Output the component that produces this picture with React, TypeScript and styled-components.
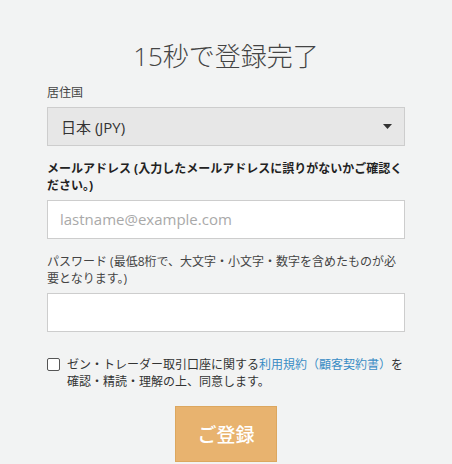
import styled, { createGlobalStyle } from "styled-components";

const GlobalStyle = createGlobalStyle`
  body {
    margin: 0;
    background: #f2f3f3;
    font-family: "Open Sans", "Noto Sans CJK JP", sans-serif;
    color: #333;
  }
`;

const Page = styled.main`
  width: 358px;
  margin: 0 auto;
  padding-top: 36px;
`;

const Title = styled.h1`
  margin: 0 0 8px;
  font-size: 26px;
  line-height: 40px;
  font-weight: 300;
  color: #444;
  text-align: center;
`;

const Field = styled.div<{ $gap?: number }>`
  display: flex;
  flex-direction: column;
  margin-bottom: ${(p) => p.$gap ?? 14}px;
`;

const Label = styled.label<{ $bold?: boolean }>`
  font-size: 12px;
  line-height: 17.5px;
  font-weight: ${(p) => (p.$bold ? 700 : 400)};
  color: ${(p) => (p.$bold ? "#222" : "#444")};
  margin-bottom: 5px;
`;

const Select = styled.div`
  box-sizing: border-box;
  height: 39px;
  display: flex;
  align-items: center;
  justify-content: space-between;
  padding: 0 12px 0 13px;
  background: #e7e7e7;
  border: 1px solid #cdcdcd;
  font-size: 15px;
  color: #333;
`;

const Input = styled.input`
  box-sizing: border-box;
  height: 39px;
  width: 100%;
  padding: 0 12px;
  background: #fff;
  border: 1px solid #cdcdcd;
  border-radius: 0;
  font-family: inherit;
  font-size: 15px;
  color: #333;
  outline: none;
  &::placeholder {
    color: #a9a9a9;
  }
`;

const AgreeRow = styled.label`
  display: flex;
  align-items: flex-start;
  gap: 7px;
  font-size: 12px;
  line-height: 17.5px;
  color: #333;
  margin-bottom: 15px;
`;

const Box = styled.span`
  flex: none;
  box-sizing: border-box;
  width: 13px;
  height: 13px;
  margin-top: 2px;
  border: 1px solid #555;
  border-radius: 2px;
  background: #fff;
`;

const Link = styled.a`
  color: #3a8dc5;
  text-decoration: none;
`;

const Actions = styled.div`
  display: flex;
  justify-content: center;
`;

const Submit = styled.button`
  box-sizing: border-box;
  height: 56px;
  padding: 0 21px;
  background: #e8b36f;
  border: 1px solid #dca75f;
  color: #fff;
  font-family: inherit;
  font-size: 19px;
  font-weight: 500;
`;

export default function App() {
  return (
    <>
      <GlobalStyle />
      <Page>
        <Title>15秒で登録完了</Title>
        <Field>
          <Label>居住国</Label>
          <Select>
            <span>日本 (JPY)</span>
            <svg width="9" height="5" viewBox="0 0 9 5">
              <path d="M0 0h9L4.5 5z" fill="#333" />
            </svg>
          </Select>
        </Field>
        <Field>
          <Label $bold>
            メールアドレス (入力したメールアドレスに誤りがないかご確認ください。)
          </Label>
          <Input placeholder="lastname@example.com" />
        </Field>
        <Field $gap={24}>
          <Label>
            パスワード (最低8桁で、大文字・小文字・数字を含めたものが必要となります。)
          </Label>
          <Input type="password" />
        </Field>
        <AgreeRow>
          <Box />
          <span>
            ゼン・トレーダー取引口座に関する<Link href="#">利用規約（顧客契約書）</Link>を確認・精読・理解の上、同意します。
          </span>
        </AgreeRow>
        <Actions>
          <Submit>ご登録</Submit>
        </Actions>
      </Page>
    </>
  );
}
